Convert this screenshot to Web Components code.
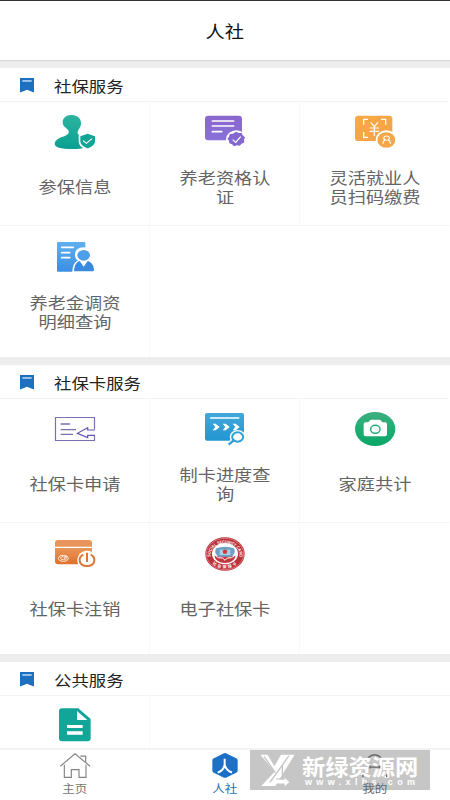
<!DOCTYPE html>
<html lang="zh-CN">
<head>
<meta charset="utf-8">
<title>人社</title>
<style>
html,body{margin:0;height:100%}
body{width:450px;height:800px;overflow:hidden;background:#fff;font-family:"Noto Sans CJK SC",sans-serif;color:#222}
</style>
</head>
<body>
<hr-app></hr-app>
<script>
const ICONS = {
  person: ['165 42 120 108', `<defs><linearGradient id="g" x2="0" y2="1"><stop stop-color="#2cb5a0"/><stop offset="1" stop-color="#0b9f91"/></linearGradient></defs>
    <path fill="url(#g)" d="M215 45c18 0 29 11 28 27-1 11-8 16-10 23-2 7 4 10 14 14 12 5 20 10 20 22 0 10-16 16-50 16-36 0-53-6-53-15 0-15 19-20 32-25 10-4 12-9 9-16-4-7-17-9-17-24 0-14 11-22 27-22z"/>
    <path fill="#fff" d="M262 97l26 10v16c0 14-10 22-25 28-16-6-27-14-27-28v-18z"/>
    <path fill="#12a596" d="M263 101l22 8v14c0 11-9 17-22 22-13-5-22-11-22-22v-14z"/>
    <path fill="none" stroke="#fff" stroke-width="3.5" d="M249 122l10 8 17-14"/>`],
  certify: ['165 42 120 108', `<defs><linearGradient id="g" x2="0" y2="1"><stop stop-color="#8b66cf"/><stop offset="1" stop-color="#8771d8"/></linearGradient></defs>
    <rect x="165" y="47" width="111" height="74" rx="10" fill="url(#g)"/>
    <path stroke="#fff" stroke-width="5" stroke-linecap="round" d="M187 63h64M187 78h64M187 95h28"/>
    <ellipse cx="259" cy="118" rx="31" ry="27" fill="#fff"/>
    <path fill="#8468cf" d="M259 95l7 4 9 0 3 7 7 6-3 7 1 8-8 4-6 6-8-1-9 3-6-6-8-3-1-8-5-6 5-6 2-8 9-1z"/>
    <path fill="none" stroke="#fff" stroke-width="3.5" d="M248 119l9 8 15-17"/>`],
  scan: ['165 42 120 108', `<defs><linearGradient id="g" x2="1" y2="1"><stop stop-color="#f9a944"/><stop offset="1" stop-color="#f2a347"/></linearGradient></defs>
    <rect x="165" y="47" width="112" height="76" rx="10" fill="url(#g)"/>
    <g fill="none" stroke="#fff" stroke-width="4"><path d="M191 74V58h13M243 58h14v16M191 96v16h13M243 112h8"/><path stroke-width="3.5" d="M212 67l11 13 11-13M223 80v28M209 84h28M209 94h28"/></g>
    <ellipse cx="259" cy="119" rx="32" ry="28" fill="#fff"/><ellipse cx="259" cy="120" rx="27" ry="23" fill="#f3a64a"/>
    <path fill="none" stroke="#fff" stroke-width="3.5" d="M249 131c0-7 3-10 7-11-9-5-4-12 4-12s12 8 4 12c4 1 7 4 7 11"/>`],
  pension: ['165 42 120 108', `<defs><linearGradient id="g" x2="0" y2="1"><stop stop-color="#60aff0"/><stop offset="1" stop-color="#3c8fe1"/></linearGradient></defs>
    <rect x="171" y="51" width="85" height="89" rx="3" fill="url(#g)"/>
    <path stroke="#fff" stroke-width="5" stroke-linecap="round" d="M185 67h35M185 83h24M185 98h24"/>
    <path fill="#fff" d="M250 67c15 0 26 9 26 23 0 8-4 13-7 17 12 5 18 15 18 38h-70c0-23 6-34 17-38-6-4-9-10-9-18 0-13 10-22 25-22z"/>
    <ellipse cx="251" cy="91" rx="19" ry="16" fill="#4d9fe9"/>
    <path fill="#398ade" d="M222 139c1-18 7-28 17-31l12 17 12-17c12 4 19 13 19 27 0 3-2 4-5 4z"/>`],
  apply: ['165 33 120 108', `<g fill="none" stroke="#7d6fb2" stroke-width="3.6"><path d="M283.500 88V52.500H166.500v69h117v-14"/><path d="M182 72h28M182 89h46M182 103h37" stroke-width="4"/><path d="M285 90h-22v-7l-31 17 31 13v-7h22" stroke="#6255b5"/></g>`],
  progress: ['165 33 120 108', `<defs><linearGradient id="g" x2="0" y2="1"><stop stop-color="#42a9dc"/><stop offset="1" stop-color="#2295cf"/></linearGradient></defs>
    <rect x="165" y="39" width="117" height="83" rx="6" fill="url(#g)"/>
    <path stroke="#fff" stroke-width="5" stroke-linecap="round" d="M182 54h84"/>
    <path fill="#fff" d="M188 71h9l12 10-12 10h-9l8-10zM218 71h9l12 10-12 10h-9l8-10zM248 71h9l12 10-12 10h-9l8-10z"/>
    <ellipse cx="263" cy="111" rx="24" ry="21" fill="#fff"/><path d="M239 133l11-10" stroke="#fff" stroke-width="16"/>
    <ellipse cx="263" cy="111" rx="16.5" ry="14" fill="#fff" stroke="#2f9fd6" stroke-width="6"/><path d="M236 134l15-13" stroke="#2f9fd6" stroke-width="7"/>`],
  camera: ['165 33 120 108', `<defs><linearGradient id="g" x2="0" y2="1"><stop stop-color="#3cb07f"/><stop offset="1" stop-color="#08a767"/></linearGradient></defs>
    <ellipse cx="225.500" cy="87" rx="60.500" ry="51" fill="url(#g)"/>
    <path fill="#fff" d="M197 67h8l5-6q1-2 4-2h24q3 0 4 2l5 6h8q6 0 6 6v30q0 6-6 6h-58q-6 0-6-6V73q0-6 6-6z"/>
    <ellipse cx="226" cy="88" rx="14" ry="12" fill="none" stroke="#26ad78" stroke-width="4.500"/>`],
  cancel: ['165 48 120 108', `<defs><linearGradient id="g" x2="0" y2="1"><stop stop-color="#e9955a"/><stop offset="1" stop-color="#df712b"/></linearGradient></defs>
    <path fill="#e9945b" d="M165 80V69q0-9 9-9h93q9 0 9 9v11z"/>
    <path fill="url(#g)" d="M165 84h111v39q0 10-10 10h-91q-10 0-10-10z"/>
    <ellipse cx="190" cy="115" rx="15" ry="9" fill="none" stroke="#fff" stroke-width="2.500"/><path d="M190 110c-9-2-11 9-1 9m8-8c-7-2-6 3-3 4s2 5-4 4m11-9h-6m3 0v9" stroke="#fff" stroke-width="2.500" fill="none"/>
    <path fill="#fff" d="M261 92c17 0 31 12 31 29s-14 26-31 26-29-10-29-26 12-29 29-29z"/>
    <path d="M250 104c-18 9-14 34 11 34s29-25 11-34" stroke="#d9773a" stroke-width="6" fill="none"/><path d="M261 98v28" stroke="#d9773a" stroke-width="6"/>`],
  emblem: ['75 33 120 108', `<ellipse cx="135" cy="87" rx="59" ry="50" fill="#bd3038"/>
    <ellipse cx="135" cy="87" rx="56" ry="47" fill="none" stroke="#e9b5b5" stroke-width="1.500"/>
    <defs><path id="top" d="M92 95C87 42 183 42 178 95"/><path id="bottom" d="M92 108C108 137 162 137 179 108"/></defs>
    <ellipse cx="135" cy="86" rx="39" ry="32" fill="#fff"/>
    <path fill="#c23840" d="M103 92h64q-4 20-32 22-28-2-32-22z"/>
    <path fill="#6ca0c4" d="M108 70q27-10 54 0 7 15-8 25h-38q-15-10-8-25z"/><path fill="#a7cfe5" d="M119 74h32v16h-32z"/>
    <path fill="#d23640" d="M128 77l7-4 7 4-2 9h-10z"/>
    <path fill="none" stroke="#fff" stroke-width="3" d="M105 91q9 10 23 8l7 7 7-7q14 2 23-8"/>
    <text font-family="Liberation Sans" font-weight="700" font-size="13" fill="#fff"><textPath href="#top" textLength="134" lengthAdjust="spacingAndGlyphs">SOCIAL SECURITY CARD</textPath></text>
    <text font-family="Noto Sans CJK SC" font-weight="700" font-size="12" fill="#fff" letter-spacing="5"><textPath href="#bottom" startOffset="9">社会保障卡</textPath></text>`],
  doc: ['165 177 120 108', `<path fill="#11a698" d="M186 178h49l37 32v58q0 9-9 9h-77q-9 0-9-9v-81q0-9 9-9z"/><path fill="#fff" d="M231 186v27h31zM201 228h47v9h-47zM201 247h47v10h-47z"/>`],
  flag: ['0 0 42 44', `<path fill="#1d6fc0" d="M0 0h42v44l-10-4-11-4-11 4-10 4z"/><path fill="#d7ecfb" d="M7 7h28v4H7z"/>`],
  home: ['180 308 90 74', `<g fill="none" stroke="#858585" stroke-width="3.500"><path d="M181 347l44-37 45 37M241 317h16v18M193 343v37h21v-23h23v23h21v-37"/></g>`],
  hex: ['637 307 78 74', `<path fill="#1c70c6" d="M676 307q3 0 6 2l29 14q3 2 3 6v30q0 4-3 6l-29 14q-6 3-12 0l-29-14q-3-2-3-6v-30q0-4 3-6l29-14q3-2 6-2z"/><path fill="none" stroke="#fff" stroke-width="6" d="M675 324v17q-3 18-21 24M675 342q5 18 22 23"/>`],
  me: ['481 37 90 74', `<g fill="none" stroke="#666" stroke-width="4"><path d="M506 50q19-16 38 0M511 79h29M511 74v9M540 74v9M490 109v-8M561 109v-8"/></g>`],
  mark: ['180 43 90 94', `<path fill="#fff" d="M181 45h22l20 34 20-34h41l-58 92h-42l40-42z"/><path fill="none" stroke="#c6c6c6" stroke-width="4" d="M192 50l34 48M267 48l-57 78M247 75v42h-18"/><path fill="#fff" d="M226 119h28v-6l14 13-14 11v-7h-37z"/>`]
};

const component = (name, css, html) => {
  customElements.define(name, class extends HTMLElement {
    connectedCallback() {
      if (this.shadowRoot) return;
      this.attachShadow({mode: 'open'}).innerHTML = `<style>${css}</style>${html(this)}`;
    }
  });
};

component('hr-icon', `:host{display:block}svg{display:block;width:100%;height:100%;overflow:visible}`, el => {
  const [box, body] = ICONS[el.getAttribute('name')];
  return `<svg viewBox="${box}" preserveAspectRatio="none">${body}</svg>`;
});

component('hr-header', `:host{display:flex;box-sizing:border-box;height:60px;flex:none;align-items:center;justify-content:center;border-top:1px solid #333;background:#fff;box-shadow:0 1px 1px #d8d8d8;z-index:1}
  span{font-size:16.8px;line-height:24px;color:#111;transform:scaleX(1.15)}`, () => `<span><slot></slot></span>`);

component('hr-section', `:host{display:block;flex:none;padding-top:8px;background:#ededed}
  header{display:flex;align-items:center;box-sizing:border-box;height:33px;padding:2px 0 0 20px;gap:20px;background:#fff}
  hr-icon{width:14px;height:14.500px}
  span{font-size:15px;line-height:22px;transform:scaleX(1.16);transform-origin:left}
  .grid{display:grid;grid-template-columns:repeat(3,150px);grid-template-rows:125px 131px;background:#fff;box-shadow:inset 0 1px #f3f3f3}`,
  el => `<header><hr-icon name="flag"></hr-icon><span>${el.getAttribute('heading')}</span></header><div class="grid"><slot></slot></div>`);

component('hr-service', `:host{display:flex;flex-direction:column;align-items:center;box-sizing:border-box;padding-top:13px;gap:18px;border-right:1px solid #f9f9f9;border-bottom:1px solid #f5f5f5}
  :host(:nth-child(3n)){border-right-color:#fff}:host(:nth-child(n+4)){border-bottom:0}
  hr-icon{width:40px;height:36px;margin-left:1px;flex:none}
  div{display:flex;align-items:center;justify-content:center;width:84px;height:37px;text-align:center;font-size:15.600px;line-height:18.500px;color:#646464;transform:scaleX(1.167);flex:none}`,
  el => `<hr-icon name="${el.getAttribute('icon')}"></hr-icon><div><span><slot></slot></span></div>`);

component('hr-tab', `:host{display:flex;flex:1;flex-direction:column;align-items:center;padding-top:3px;gap:1px;color:#777}
  :host([active]){color:#256fb5}
  :host([icon="me"]){color:#666}
  hr-icon{width:30px;height:25px}:host([active]) hr-icon{width:26px}
  span{font-size:10.800px;line-height:18px;transform:scaleX(1.16)}`,
  el => `<hr-icon name="${el.getAttribute('icon')}"></hr-icon><span><slot></slot></span>`);

component('hr-tabbar', `:host{display:flex;box-sizing:border-box;height:52px;flex:none;position:relative;border-top:2px solid #f3f3f3;z-index:3}`, () => `<slot></slot>`);

component('hr-watermark', `:host{position:absolute;left:250px;top:750px;width:180px;height:40px;display:flex;box-sizing:border-box;padding:4px 0 0 10px;gap:12px;background:#c6c6c6;color:#fff;z-index:2}
  hr-icon{width:30px;height:32px;flex:none}
  div{display:flex;flex-direction:column;white-space:nowrap}
  b{font-size:21.500px;line-height:23px;transform:scaleX(1.08);transform-origin:left}
  small{font:700 9px/11px "Liberation Sans",sans-serif;letter-spacing:4.350px;padding-left:3px}`,
  () => `<hr-icon name="mark"></hr-icon><div><b>新绿资源网</b><small>www.xlhs.com</small></div>`);

component('hr-app', `:host{display:flex;flex-direction:column;position:relative;width:450px;height:800px;overflow:hidden;background:#fff}
  main{flex:1;min-height:0;overflow:hidden;display:flex;flex-direction:column}`,
  () => `<hr-header>人社</hr-header>
  <main>
    <hr-section heading="社保服务">
      <hr-service icon="person">参保信息</hr-service><hr-service icon="certify">养老资格认证</hr-service><hr-service icon="scan">灵活就业人员扫码缴费</hr-service><hr-service icon="pension">养老金调资明细查询</hr-service>
    </hr-section>
    <hr-section heading="社保卡服务">
      <hr-service icon="apply">社保卡申请</hr-service><hr-service icon="progress">制卡进度查询</hr-service><hr-service icon="camera">家庭共计</hr-service><hr-service icon="cancel">社保卡注销</hr-service><hr-service icon="emblem">电子社保卡</hr-service>
    </hr-section>
    <hr-section heading="公共服务"><hr-service icon="doc"></hr-service></hr-section>
  </main>
  <hr-tabbar><hr-tab icon="home">主页</hr-tab><hr-tab icon="hex" active>人社</hr-tab><hr-tab icon="me">我的</hr-tab></hr-tabbar>
  <hr-watermark></hr-watermark>`);
</script>
</body>
</html>
